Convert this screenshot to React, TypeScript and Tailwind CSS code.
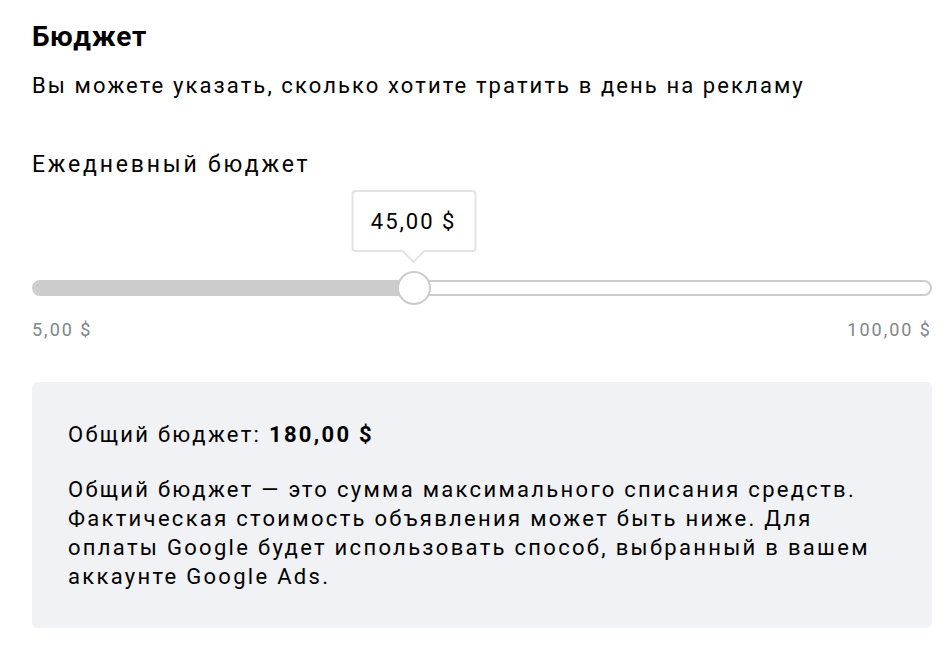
export default function App() {
  const min = 5;
  const max = 100;
  const value = 45;
  const ratio = (value - min) / (max - min);
  // thumb travels inside the track, minus its own width
  const thumbCenter = `calc(${ratio} * (100% - 34px) + 17px)`;

  return (
    <div
      className="flex min-h-[648px] flex-col bg-white pl-8 pr-4 pt-[21px] text-black"
      style={{ fontFamily: "Roboto, 'Noto Sans', sans-serif" }}
    >
      <h2 className="text-[28px] font-bold leading-8 tracking-[0.8px]">Бюджет</h2>
      <p className="mt-[19px] text-[22px] leading-7 tracking-[2.1px]">
        Вы можете указать, сколько хотите тратить в день на рекламу
      </p>

      <p className="mt-[51px] text-[23px] leading-7 tracking-[2.8px]">Ежедневный бюджет</p>

      {/* Slider */}
      <div className="relative mt-[92px] flex h-[34px] items-center">
        <div className="relative h-4 w-full overflow-hidden rounded-full border-2 border-[#cccccc] bg-white">
          <div className="h-full bg-[#cccccc]" style={{ width: thumbCenter }} />
        </div>
        <div
          className="absolute top-0 h-[34px] w-[34px] -translate-x-1/2 rounded-full border-2 border-[#cccccc] bg-white"
          style={{ left: thumbCenter }}
        />
        {/* Tooltip */}
        <div className="absolute bottom-[53px] -translate-x-1/2" style={{ left: thumbCenter }}>
          <div className="relative flex h-[62px] w-[125px] items-center justify-center rounded-[4px] border-2 border-[#e3e3e3] bg-white text-[22px] tracking-[2px]">
            45,00 $
            <div className="absolute -bottom-[10px] left-1/2 h-[16px] w-[16px] -translate-x-1/2 rotate-45 border-b-2 border-r-2 border-[#e3e3e3] bg-white" />
          </div>
        </div>
      </div>

      <div className="mt-[13px] flex justify-between text-[18px] leading-6 tracking-[2px] text-[#80868b]">
        <span>5,00 $</span>
        <span>100,00 $</span>
      </div>

      {/* Total */}
      <div className="mt-[40px] rounded-md bg-[#f1f2f6] px-9 pb-[37px] pt-[39px] text-[22px] tracking-[2.3px]">
        <p className="leading-7">
          Общий бюджет: <span className="font-bold">180,00 $</span>
        </p>
        <p className="mt-[26px] max-w-[815px] leading-[29px]">
          Общий бюджет — это сумма максимального списания средств. Фактическая стоимость объявления может быть ниже. Для оплаты Google будет использовать способ, выбранный в вашем аккаунте Google Ads.
        </p>
      </div>
    </div>
  );
}
